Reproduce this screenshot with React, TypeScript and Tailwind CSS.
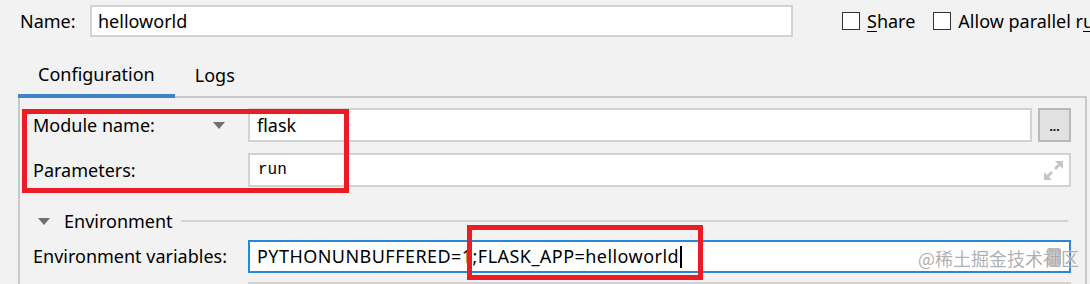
import React from 'react';

const FONT = { fontFamily: '"Noto Sans", "Noto Sans CJK SC", sans-serif' };

function Caret({ className = '' }: { className?: string }) {
  return (
    <svg width="12" height="7" viewBox="0 0 12 7" className={className}>
      <polygon points="0,0 12,0 6,7" fill="#6f6f6f" />
    </svg>
  );
}

function Checkbox({ label, mnemonic }: { label: string; mnemonic: number }) {
  return (
    <div className="flex items-center gap-[7px] shrink-0">
      <div className="h-[18px] w-[18px] border border-[#333333] bg-white" />
      <span className="text-[18px] text-black whitespace-nowrap">
        {label.slice(0, mnemonic)}
        <span className="underline underline-offset-[3px]">{label[mnemonic]}</span>
        {label.slice(mnemonic + 1)}
      </span>
    </div>
  );
}

function ExpandIcon() {
  return (
    <svg width="19" height="19" viewBox="0 0 19 19" fill="#c3c6c9">
      <polygon points="19,0 19,8 16,5 12,9 10,7 14,3 11,0" />
      <polygon points="0,19 0,11 3,14 7,10 9,12 5,16 8,19" />
    </svg>
  );
}

export default function App() {
  return (
    <div
      className="relative h-[284px] w-[1090px] overflow-hidden bg-[#f2f2f2] text-black"
      style={FONT}
    >
      {/* Name row */}
      <div className="mt-[5px] flex h-[32px] items-center">
        <span className="ml-[20px] w-[70px] shrink-0 text-[18px]">Name:</span>
        <div className="flex h-[32px] w-[703px] shrink-0 items-center border-2 border-[#d2d2d2] bg-white pl-[6px] text-[18px]">
          helloworld
        </div>
        <div className="ml-[49px] flex shrink-0 items-center gap-[18px]">
          <Checkbox label="Share" mnemonic={0} />
          <Checkbox label="Allow parallel run" mnemonic={16} />
        </div>
      </div>

      {/* Tabs */}
      <div className="ml-[18px] mt-[17px] flex w-[1069px]">
        <div className="flex h-[44px] items-center border-b-4 border-[#3f84c8] px-[20px] text-[18px]">
          Configuration
        </div>
        <div className="flex h-[44px] flex-1 items-center border-b-2 border-[#c9c9c9] px-[20px] text-[18px]">
          Logs
        </div>
      </div>

      {/* Panel */}
      <div className="ml-[18px] flex w-[1069px] flex-col border-x-2 border-[#c9c9c9] pl-[13px] pr-[14px] pt-[10px] pb-[20px]">
        <div className="flex h-[34px] items-center">
          <div className="flex w-[215px] items-center justify-between pr-[23px] text-[18px]">
            <span>Module name:</span>
            <Caret />
          </div>
          <div className="flex h-[34px] flex-1 items-center border-2 border-[#d2d2d2] bg-white pl-[7px] text-[18px]">
            flask
          </div>
          <div className="ml-[6px] flex h-[34px] w-[33px] items-center justify-center border-2 border-[#b9b9b9] bg-[#e1e1e1] pt-[4px] text-[12px] font-bold leading-none">
            ...
          </div>
        </div>

        <div className="mt-[11px] flex h-[34px] items-center">
          <div className="w-[215px] text-[18px]">Parameters:</div>
          <div className="flex h-[34px] flex-1 items-center justify-between border-2 border-[#d2d2d2] bg-white pl-[8px] pr-[6px]">
            <span className="text-[16px]" style={{ fontFamily: '"Liberation Mono", monospace' }}>
              run
            </span>
            <ExpandIcon />
          </div>
        </div>

        <div className="mt-[23px] flex h-[22px] items-center pl-[5px]">
          <Caret />
          <span className="ml-[14px] text-[18px]">Environment</span>
          <div className="ml-[8px] mr-[3px] h-[2px] flex-1 bg-[#d3d3d3]" />
        </div>

        <div className="mt-[8px] flex h-[33px] items-center">
          <div className="w-[215px] text-[18px]">Environment variables:</div>
          <div className="flex h-[33px] flex-1 items-center justify-between border-2 border-[#2a87d8] bg-white pl-[7px] pr-[8px] text-[18px]">
            <span className="flex items-center tracking-[0.45px]">
              PYTHONUNBUFFERED=1;FLASK_APP=helloworld
              <span className="ml-[1px] inline-block h-[22px] w-[2px] bg-black" />
            </span>
            <div className="h-[18px] w-[14px] rounded-[2px] bg-[#b8b8b8]" />
          </div>
        </div>

        <div className="mt-[9px] ml-[215px] h-[2px] bg-[#d2d2d2]" />
      </div>

      {/* annotations */}
      <div className="absolute left-[22px] top-[109px] h-[84px] w-[327px] border-[5px] border-[#ec1c24]" />
      <div className="absolute left-[467px] top-[225px] h-[55px] w-[236px] border-[5px] border-[#ec1c24]" />
      <div
        className="absolute left-[918px] top-[249px] text-[18px] leading-none text-[#9b9b9b]/80"
        style={{ fontFamily: '"Noto Sans CJK SC", sans-serif', textShadow: '0 0 2px #ffffff' }}
      >
        @稀土掘金技术社区
      </div>
    </div>
  );
}
